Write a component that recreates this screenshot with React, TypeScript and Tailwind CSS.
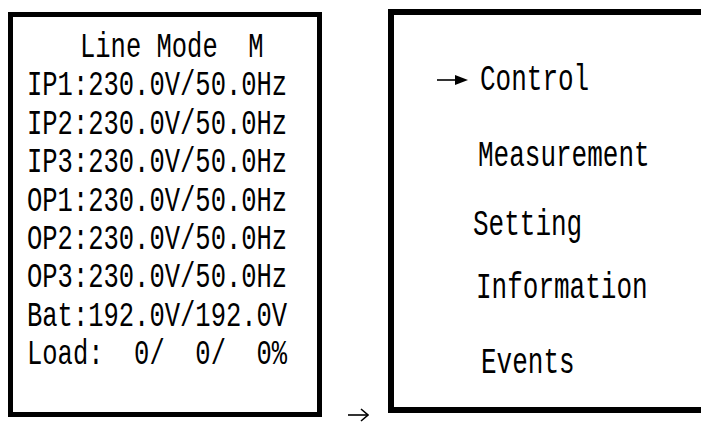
import React from 'react';

const leftLines = [
  'IP1:230.0V/50.0Hz',
  'IP2:230.0V/50.0Hz',
  'IP3:230.0V/50.0Hz',
  'OP1:230.0V/50.0Hz',
  'OP2:230.0V/50.0Hz',
  'OP3:230.0V/50.0Hz',
  'Bat:192.0V/192.0V',
  'Load:  0/  0/  0%',
];

const mono = "font-['Liberation_Mono',monospace]";

const MenuArrow = () => (
  <svg width="31" height="12" viewBox="0 0 31 12" className="shrink-0">
    <line x1="0" y1="6" x2="20" y2="6" stroke="#000" strokeWidth="1.6" />
    <polygon points="18,1 31,6 18,11" fill="#000" />
  </svg>
);

const SmallArrow = () => (
  <svg width="21" height="14" viewBox="0 0 21 14">
    <line x1="0" y1="7" x2="20" y2="7" stroke="#000" strokeWidth="1.6" />
    <polyline points="13,1 20,7 13,13" fill="none" stroke="#000" strokeWidth="1.6" />
  </svg>
);

export default function App() {
  return (
    <div className={`w-[701px] h-[426px] overflow-hidden bg-white flex items-start pl-[8px] text-black ${mono}`}>
      {/* status screen */}
      <div className="mt-[12px] w-[314px] h-[405px] shrink-0 border-[5px] border-black pt-[13px] pl-[14px] text-[25.5px] leading-[38.4px]">
        <div className="pl-[53px] whitespace-pre scale-y-[1.35]">Line Mode  M</div>
        {leftLines.map((l) => (
          <div key={l} className="whitespace-pre scale-y-[1.35]">
            {l}
          </div>
        ))}
      </div>

      {/* transition arrow */}
      <div className="w-[66px] shrink-0 self-stretch flex items-end pl-[26px] pb-[4px]">
        <SmallArrow />
      </div>

      {/* main menu */}
      <div className="mt-[9px] w-[330px] h-[404px] shrink-0 border-l-[6px] border-t-[6px] border-b-[6px] border-black text-[26px] leading-[30px]">
        <div className="mt-[50px] flex items-center pl-[43px] gap-[12px]">
          <MenuArrow />
          <span className="scale-y-[1.4] inline-block">Control</span>
        </div>
        <div className="mt-[46px] pl-[84px] scale-y-[1.4]">Measurement</div>
        <div className="mt-[39px] pl-[79px] scale-y-[1.4]">Setting</div>
        <div className="mt-[33px] pl-[82px] scale-y-[1.4]">Information</div>
        <div className="mt-[45px] pl-[87px] scale-y-[1.4]">Events</div>
      </div>
    </div>
  );
}
